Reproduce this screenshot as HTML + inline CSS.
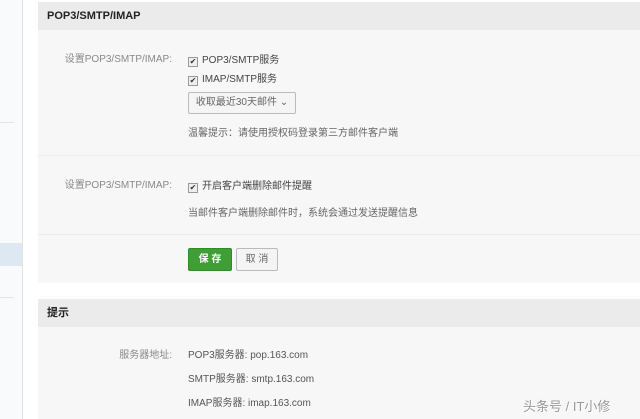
<!DOCTYPE html>
<html><head><meta charset="utf-8"><style>
body{margin:0;width:640px;height:419px;background:#fff;font-family:"Liberation Sans","Noto Sans CJK SC",sans-serif;font-size:10px;color:#444;position:relative;overflow:hidden}
.a{position:absolute}
.sb{left:0;top:0;width:22px;height:419px;background:#f9fafb;border-right:1px solid #e2e2e2}
.hd{left:38px;width:602px;height:28px;background:#ebebeb;font-weight:bold;color:#222;font-size:11px;line-height:28px;text-indent:9px}
.bd{left:38px;width:602px;background:#f7f7f7}
.lb{left:38px;width:134px;text-align:right;color:#888}
.cb{display:inline-block;width:8px;height:8px;border:1px solid #999;background:#eee;margin-right:4px;vertical-align:-1px;font-size:8px;line-height:8px;text-align:center;color:#333}
.ln{left:38px;width:602px;height:1px;background:#ececec}
</style></head><body>
<div class="a sb"></div>
<div class="a" style="left:0;top:122px;width:14px;height:1px;background:#e4e4e4"></div>
<div class="a" style="left:0;top:243px;width:22px;height:23px;background:#dde8f2"></div>
<div class="a" style="left:0;top:297px;width:14px;height:1px;background:#e4e4e4"></div>

<div class="a hd" style="top:2px">POP3/SMTP/IMAP</div>
<div class="a bd" style="top:30px;height:253px"></div>
<div class="a ln" style="top:155px"></div>
<div class="a ln" style="top:234px"></div>

<div class="a lb" style="top:50px">设置POP3/SMTP/IMAP:</div>
<div class="a" style="left:188px;top:51px;color:#444"><span class="cb">✔</span>POP3/SMTP服务</div>
<div class="a" style="left:188px;top:70px;color:#444"><span class="cb">✔</span>IMAP/SMTP服务</div>
<div class="a" style="left:188px;top:92px;width:106px;height:20px;border:1px solid #bbb;border-radius:2px;background:#f5f5f5;line-height:20px;text-align:center;color:#666">收取最近30天邮件 ⌄</div>
<div class="a" style="left:188px;top:124px;color:#666">温馨提示：请使用授权码登录第三方邮件客户端</div>

<div class="a lb" style="top:176px">设置POP3/SMTP/IMAP:</div>
<div class="a" style="left:188px;top:177px;color:#444"><span class="cb">✔</span>开启客户端删除邮件提醒</div>
<div class="a" style="left:188px;top:204px;color:#666">当邮件客户端删除邮件时，系统会通过发送提醒信息</div>

<div class="a" style="left:188px;top:248px;width:42px;height:21px;background:#3f9e35;border:1px solid #2f8a28;border-radius:2px;color:#fff;font-weight:bold;text-align:center;line-height:21px">保 存</div>
<div class="a" style="left:236px;top:248px;width:40px;height:21px;background:#f4f4f4;border:1px solid #bbb;border-radius:2px;color:#666;text-align:center;line-height:21px">取 消</div>

<div class="a hd" style="top:299px">提示</div>
<div class="a bd" style="top:327px;height:92px"></div>
<div class="a lb" style="top:346px">服务器地址:</div>
<div class="a" style="left:188px;top:346px;color:#555">POP3服务器: pop.163.com</div>
<div class="a" style="left:188px;top:370px;color:#555">SMTP服务器: smtp.163.com</div>
<div class="a" style="left:188px;top:394px;color:#555">IMAP服务器: imap.163.com</div>
<div class="a" style="left:523px;top:396px;font-size:13px;color:#999;text-shadow:1px 1px 0 #fff">头条号 / IT小修</div>
</body></html>
